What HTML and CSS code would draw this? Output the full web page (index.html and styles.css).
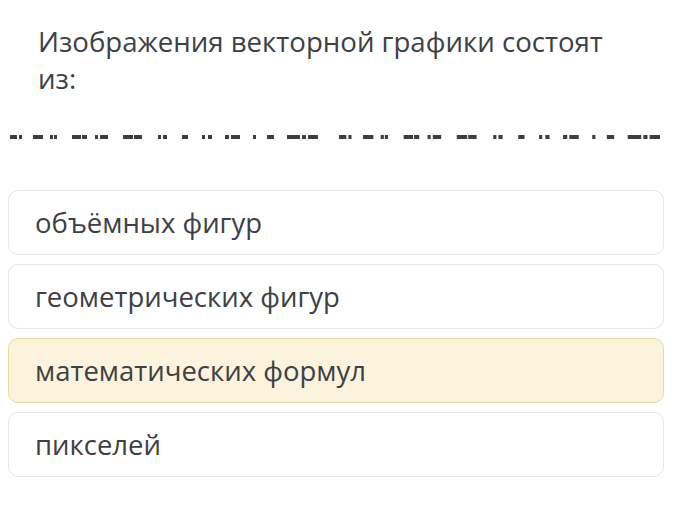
FILE: index.html
```html
<!DOCTYPE html>
<html lang="ru">
<head>
    <meta charset="UTF-8">
    <meta name="viewport" content="width=device-width, initial-scale=1.0">
    <title>Вопрос</title>
    <link rel="stylesheet" href="styles.css">
</head>
<body>
    <main class="quiz">
        <h1 class="question">Изображения векторной графики состоят<br>из:</h1>

        <!-- blurred hint strip -->
        <div class="hint">
            <svg class="dashes" viewBox="0 0 308 4" preserveAspectRatio="none">
                <g fill="#3b3e42">
                    <rect x="0" width="7" height="4"/><rect x="9" width="3" height="4"/>
                    <rect x="23" width="10" height="4"/>
                    <rect x="40" width="3" height="4"/><rect x="44" width="3" height="4"/>
                    <rect x="62" width="9" height="4"/><rect x="72" width="5" height="4"/>
                    <rect x="85" width="3" height="4"/><rect x="90" width="8" height="4"/>
                    <rect x="113" width="10" height="4"/><rect x="124" width="8" height="4"/>
                    <rect x="148" width="3" height="4"/><rect x="153" width="4" height="4"/>
                    <rect x="172" width="6" height="4"/>
                    <rect x="192" width="3" height="4"/><rect x="198" width="4" height="4"/>
                    <rect x="215" width="4" height="4"/><rect x="221" width="9" height="4"/>
                    <rect x="243" width="3" height="4"/>
                    <rect x="257" width="7" height="4"/>
                    <rect x="277" width="13" height="4"/><rect x="292" width="4" height="4"/><rect x="298" width="10" height="4"/>
                </g>
            </svg>
            <svg class="dashes wide" viewBox="0 0 308 4" preserveAspectRatio="none">
                <g fill="#3b3e42">
                    <rect x="0" width="7" height="4"/><rect x="9" width="3" height="4"/>
                    <rect x="23" width="10" height="4"/>
                    <rect x="40" width="3" height="4"/><rect x="44" width="3" height="4"/>
                    <rect x="62" width="9" height="4"/><rect x="72" width="5" height="4"/>
                    <rect x="85" width="3" height="4"/><rect x="90" width="8" height="4"/>
                    <rect x="113" width="10" height="4"/><rect x="124" width="8" height="4"/>
                    <rect x="148" width="3" height="4"/><rect x="153" width="4" height="4"/>
                    <rect x="172" width="6" height="4"/>
                    <rect x="192" width="3" height="4"/><rect x="198" width="4" height="4"/>
                    <rect x="215" width="4" height="4"/><rect x="221" width="9" height="4"/>
                    <rect x="243" width="3" height="4"/>
                    <rect x="257" width="7" height="4"/>
                    <rect x="277" width="13" height="4"/><rect x="292" width="4" height="4"/><rect x="298" width="10" height="4"/>
                </g>
            </svg>
        </div>

        <!-- Answer options -->
        <ul class="answers">
            <li class="answer">объёмных фигур</li>
            <li class="answer">геометрических фигур</li>
            <li class="answer selected">математических формул</li>
            <li class="answer">пикселей</li>
        </ul>
    </main>
</body>
</html>
```

FILE: styles.css
```css
body { margin: 0; background-color: #fff; font-family: "Open Sans", "Noto Sans", sans-serif; color: #3d4145; }
.quiz { padding-top: 23px; }
.question { margin: 0; padding-left: 38px; font-size: 27.6px; font-weight: normal; line-height: 37px; }
.hint { display: flex; gap: 21px; padding-left: 10px; margin-top: 38px; }
.dashes { display: block; width: 308px; height: 4px; }
.dashes.wide { width: 321px; }
.answers { list-style: none; margin: 51px 0 0; padding: 0 17px 0 8px; display: flex; flex-direction: column; gap: 9px; }
.answer { box-sizing: border-box; height: 65px; display: flex; align-items: center; padding: 0 26px; font-size: 27.5px; border: 1px solid #e3e8ea; border-radius: 10px; background-color: #fff; }
.answer.selected { background-color: #fbf3dc; border-color: #e9d8a8; }
```
